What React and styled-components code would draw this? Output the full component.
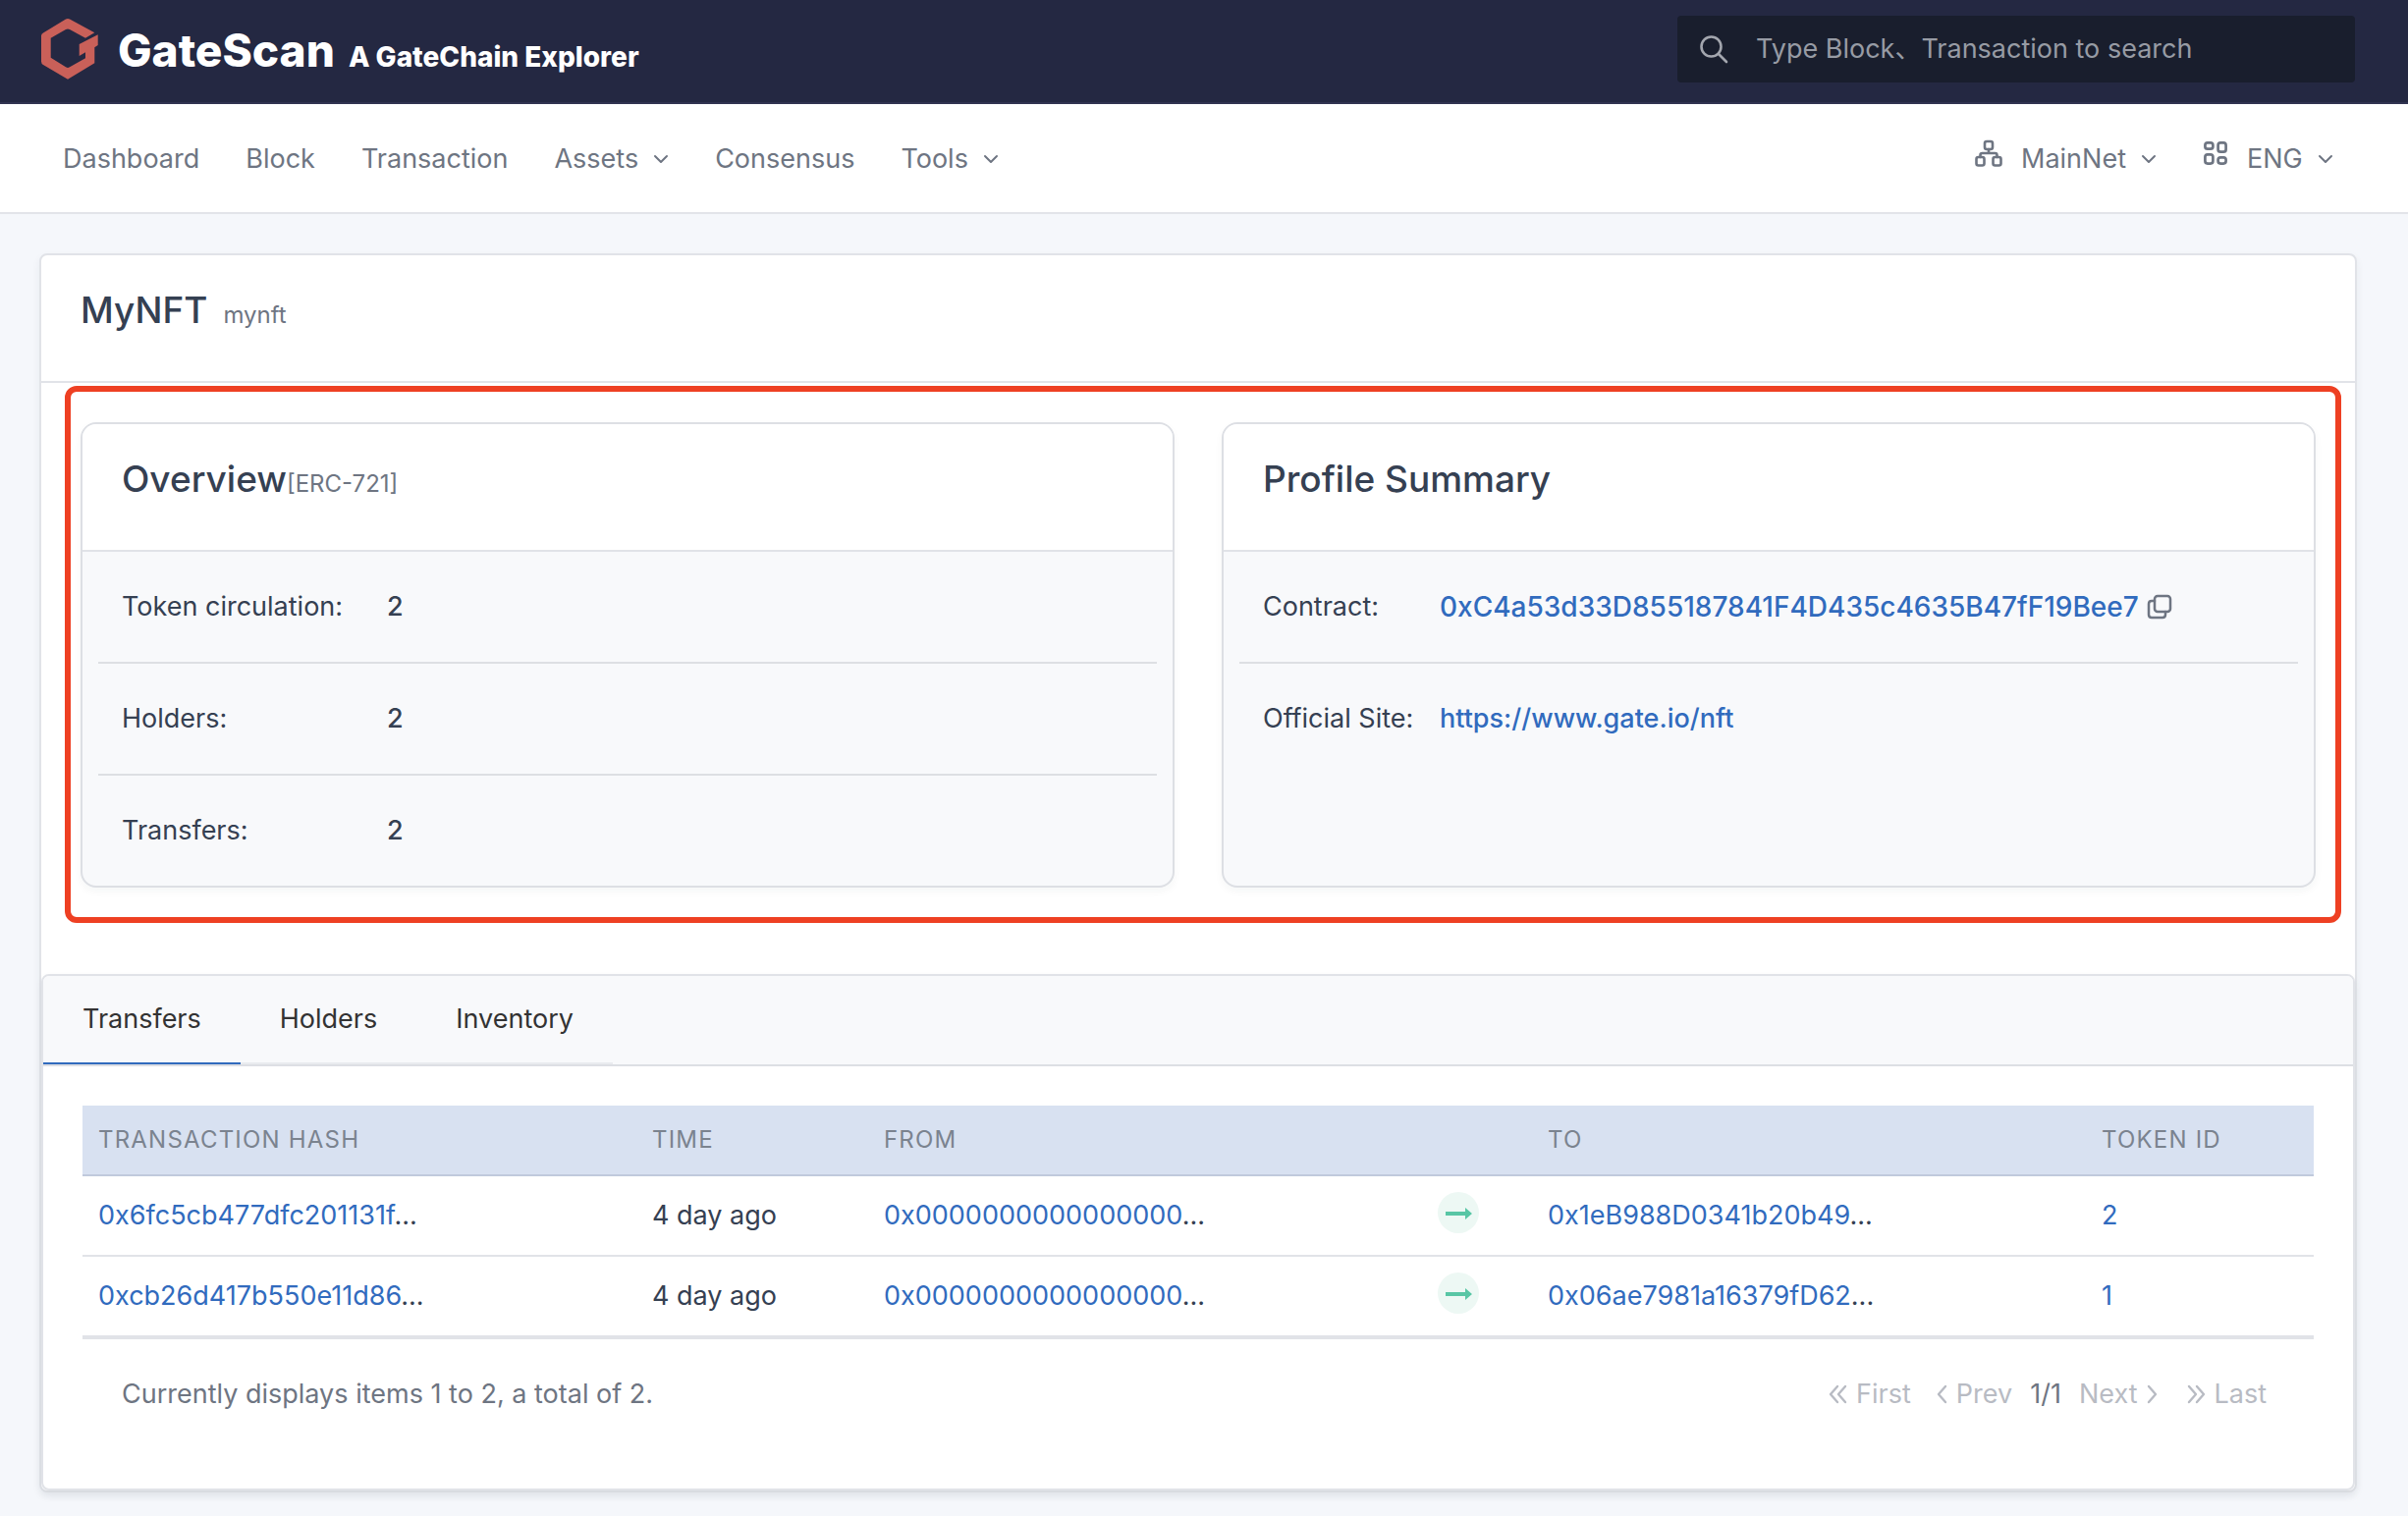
import React from "react";
import styled, { createGlobalStyle } from "styled-components";

const GlobalStyle = createGlobalStyle`
  *, *::before, *::after { box-sizing: border-box; }
  body {
    margin: 0;
    background: #f5f7fb;
    color: #354052;
    font-family: Inter, "Noto Sans CJK SC", "Liberation Sans", sans-serif;
    font-size: 27px;
    line-height: 40px;
  }
  button, input, select { font: inherit; color: inherit; }
`;

const TopBar = styled.header`
  display: flex;
  align-items: center;
  justify-content: space-between;
  height: 106px;
  padding: 0 54px 4px 40px;
  background: #242842;
  border-bottom: 2px solid #303350;
`;

const Brand = styled.a`
  display: flex;
  align-items: center;
  gap: 20px;
  color: #fff;
  text-decoration: none;
`;

const BrandText = styled.span`
  display: flex;
  align-items: baseline;
  gap: 14px;
  padding-top: 2px;
  font-weight: 800;
`;

const BrandName = styled.span`
  font-size: 46px;
  line-height: 56px;
`;

const Tagline = styled.span`
  font-size: 28px;
`;

const SearchBox = styled.label`
  display: flex;
  align-items: center;
  gap: 28px;
  width: 690px;
  height: 68px;
  padding: 0 22px;
  border-radius: 4px;
  background: #191e2d;
  color: #a3a6ae;
`;

const SearchInput = styled.input`
  flex: 1;
  min-width: 0;
  padding: 0;
  border: 0;
  outline: 0;
  background: transparent;
  &::placeholder { color: #979ba4; opacity: 1; }
`;

const NavBar = styled.nav`
  display: flex;
  align-items: center;
  justify-content: space-between;
  height: 112px;
  padding: 2px 76px 0 64px;
  background: #fff;
  border-bottom: 2px solid #e2e4e9;
  color: #6e7582;
`;

const NavGroup = styled.div`
  display: flex;
  align-items: center;
  gap: 47px;
`;

const NavLink = styled.a`
  color: inherit;
  text-decoration: none;
`;

const MenuButton = styled.button`
  display: flex;
  align-items: center;
  gap: 15px;
  padding: 0;
  border: 0;
  background: none;
`;

const Picker = styled.label`
  display: flex;
  align-items: center;
  gap: 15px;
`;

const PickerIcon = styled.span`
  display: flex;
  padding: 0 4px 12px 0;
`;

const PickerSelect = styled.select`
  appearance: none;
  padding: 0;
  border: 0;
  background: none;
`;

const Page = styled.main`
  padding: 40px 52px 24px 40px;
`;

const Panel = styled.section`
  background: #fff;
  border: 2px solid #e1e3e8;
  border-radius: 8px;
  box-shadow: 0 4px 8px rgba(35, 46, 60, 0.06);
`;

const PanelHeader = styled.div`
  display: flex;
  align-items: baseline;
  gap: ${(p) => p.$gap || 0}px;
  height: 130px;
  padding: 36px 40px;
  border-bottom: 2px solid #e1e3e8;
`;

const Title = styled.h2`
  margin: 0;
  font-size: 37px;
  line-height: 40px;
  font-weight: 500;
`;

const Subtitle = styled.span`
  font-size: 24px;
  color: #6e7582;
`;

const Summary = styled.div`
  position: relative;
  display: grid;
  grid-template-columns: 1fr 1fr;
  gap: 48px;
  padding: 40px;
  margin-bottom: 48px;
`;

const Highlight = styled.div`
  position: absolute;
  inset: 3px 14px 4px 24px;
  border: 6px solid #ee4023;
  border-radius: 12px;
  pointer-events: none;
`;

const InfoCard = styled.section`
  overflow: hidden;
  background: #f8f9fb;
  border: 2px solid #dddfe4;
  border-radius: 16px;
  box-shadow: 0 4px 8px rgba(35, 46, 60, 0.04);
  ${PanelHeader} { background: #fff; }
`;

const InfoList = styled.dl`
  margin: 0;
  padding: 0 16px;
`;

const InfoRow = styled.div`
  display: grid;
  grid-template-columns: ${(p) => p.$label}px 1fr;
  align-items: center;
  padding: 36px 24px;
  & + & { border-top: 2px solid #dddfe3; }
`;

const InfoValue = styled.dd`
  display: flex;
  align-items: center;
  gap: 8px;
  margin: 0;
  font-weight: 500;
`;

const TextLink = styled.a`
  color: #316bbe;
  text-decoration: none;
`;

const AddressLink = styled(TextLink)`
  font-size: 28px;
`;

const IconButton = styled.button`
  display: flex;
  padding: 0;
  border: 0;
  background: none;
  color: #6e7582;
`;

const TabCard = styled(Panel)`
  overflow: hidden;
`;

const TabList = styled.div`
  display: flex;
  background: #f8f9fb;
  border-bottom: 2px solid #dddfe4;
`;

const Tab = styled.button`
  padding: 24px 40px;
  border: 0;
  border-bottom: 2px solid ${(p) => (p.$active ? "#316bbe" : "#e9ebef")};
  background: none;
  color: #333;
`;

const TabBody = styled.div`
  padding: 40px;
`;

const Table = styled.table`
  width: 100%;
  table-layout: fixed;
  border-collapse: separate;
  border-spacing: 0;
  border-bottom: 2px solid #e1e3e8;
`;

const Col = styled.col`
  width: ${(p) => (p.$w ? p.$w + "px" : "auto")};
`;

const HeadCell = styled.th`
  padding: 15px 16px;
  text-align: left;
  font-size: 24px;
  font-weight: 400;
  letter-spacing: 0.05em;
  text-transform: uppercase;
  color: #7b838f;
  background: #d8e1f1;
  border-bottom: 2px solid #c0cadc;
`;

const Cell = styled.td`
  height: 82px;
  padding: 0 16px;
  border-bottom: 2px solid #e1e3e8;
`;

const Direction = styled.span`
  display: flex;
  padding-bottom: 6px;
`;

const TableFooter = styled.div`
  display: flex;
  align-items: center;
  justify-content: space-between;
  padding: 36px 48px 36px 40px;
  color: #6e7582;
`;

const Pager = styled.div`
  display: flex;
  align-items: center;
  gap: 18px;
`;

const PageButton = styled.button`
  display: flex;
  align-items: center;
  gap: 8px;
  padding: 0;
  border: 0;
  background: none;
  &:disabled { color: #b8bbc3; }
`;

const PagerPair = styled.div`
  display: flex;
  gap: ${(p) => p.$gap}px;
`;

const Stroke = ({ w, h, sw = 2, children }) => (
  <svg width={w} height={h} viewBox={`0 0 ${w} ${h}`} fill="none" stroke="currentColor" strokeWidth={sw} strokeLinecap="round" strokeLinejoin="round" aria-hidden="true">
    {children}
  </svg>
);

const Logo = () => (
  <svg width="60" height="64" viewBox="0 0 60 64" fill="#c96059" aria-hidden="true">
    <path d="M27 1.500q2-1.200 4 0L56.300 15.300 47 20.700 31 12q-2-1.200-4 0L11.700 20.700V40.700L27 50.300q2 1.200 4 0L47 41.300V35.300L40.700 39V27L59.700 17.300V28L56.300 30.300V46.300L29 62.700 4 48q-2-1.200-2-3.500V18.500q0-1.800 2-3Z" />
  </svg>
);

const Chevron = () => (
  <Stroke w={16} h={16}><path d="M2 5l6 6 6-6" /></Stroke>
);

const NetworkIcon = () => (
  <Stroke w={28} h={28} sw={2.6}>
    <rect x="10" y="2" width="8" height="8" rx="2" />
    <rect x="1.500" y="18" width="8" height="8.500" rx="2" />
    <rect x="18.500" y="18" width="8" height="8.500" rx="2" />
    <path d="M14 10v4M5.500 18v-2q0-2 2-2h13q2 0 2 2v2" />
  </Stroke>
);

const GridIcon = () => (
  <Stroke w={26} h={26} sw={2.7}>
    <rect x="2.400" y="2.400" width="8" height="6.300" rx="2.500" />
    <rect x="15.600" y="2.400" width="8" height="9.300" rx="2.500" />
    <rect x="2.400" y="14.300" width="8" height="9.300" rx="2.500" />
    <rect x="15.600" y="17.300" width="8" height="6.300" rx="2.500" />
  </Stroke>
);

const SearchIcon = () => (
  <Stroke w={30} h={30} sw={2.6}><circle cx="12.500" cy="12.500" r="10" /><path d="M20 20l8 8" /></Stroke>
);

const CopyIcon = () => (
  <Stroke w={26} h={26} sw={2.5}>
    <rect x="8" y="2" width="16" height="16" rx="3" />
    <path d="M8 7H5q-3 0-3 3v11q0 3 3 3h11q3 0 3-3v-3" />
  </Stroke>
);

const ArrowBadge = () => (
  <svg width="42" height="42" viewBox="0 0 42 42" aria-hidden="true">
    <circle cx="21" cy="21" r="21" fill="#edf8f4" />
    <path d="M8 20H28V16L35 22 28 28V24H8Z" fill="#58c6a5" />
  </svg>
);

const AngleLeft = () => <Stroke w={14} h={20} sw={2.4}><path d="M11 2L4 10l7 8" /></Stroke>;
const AngleRight = () => <Stroke w={14} h={20} sw={2.4}><path d="M4 2l7 8-7 8" /></Stroke>;
const DoubleLeft = () => <Stroke w={20} h={20} sw={2.4}><path d="M9 2l-7 8 7 8M17 2l-7 8 7 8" /></Stroke>;
const DoubleRight = () => <Stroke w={20} h={20} sw={2.4}><path d="M3 2l7 8-7 8M11 2l7 8-7 8" /></Stroke>;

const transfers = [
  { hash: "0x6fc5cb477dfc201131f", time: "4 day ago", from: "0x0000000000000000", to: "0x1eB988D0341b20b49", id: "2" },
  { hash: "0xcb26d417b550e11d86", time: "4 day ago", from: "0x0000000000000000", to: "0x06ae7981a16379fD62", id: "1" },
];

const overview = [
  ["Token circulation:", "2"],
  ["Holders:", "2"],
  ["Transfers:", "2"],
];

export default function App() {
  const [tab, setTab] = React.useState("Transfers");
  return (
    <>
      <GlobalStyle />
      <TopBar>
        <Brand href="#">
          <Logo />
          <BrandText>
            <BrandName>GateScan</BrandName>
            <Tagline>A GateChain Explorer</Tagline>
          </BrandText>
        </Brand>
        <SearchBox>
          <SearchIcon />
          <SearchInput type="text" placeholder="Type Block、Transaction to search" />
        </SearchBox>
      </TopBar>
      <NavBar>
        <NavGroup>
          <NavLink href="#">Dashboard</NavLink>
          <NavLink href="#">Block</NavLink>
          <NavLink href="#">Transaction</NavLink>
          <MenuButton aria-haspopup="menu">Assets <Chevron /></MenuButton>
          <NavLink href="#">Consensus</NavLink>
          <MenuButton aria-haspopup="menu">Tools <Chevron /></MenuButton>
        </NavGroup>
        <NavGroup>
          <Picker>
            <PickerIcon><NetworkIcon /></PickerIcon>
            <PickerSelect><option>MainNet</option></PickerSelect>
            <Chevron />
          </Picker>
          <Picker>
            <PickerIcon><GridIcon /></PickerIcon>
            <PickerSelect><option>ENG</option></PickerSelect>
            <Chevron />
          </Picker>
        </NavGroup>
      </NavBar>
      <Page>
        <Panel>
          <PanelHeader $gap={16}>
            <Title>MyNFT</Title>
            <Subtitle>mynft</Subtitle>
          </PanelHeader>
          <Summary>
            <InfoCard>
              <PanelHeader>
                <Title>Overview</Title>
                <Subtitle>[ERC-721]</Subtitle>
              </PanelHeader>
              <InfoList>
                {overview.map(([label, value]) => (
                  <InfoRow key={label} $label={270}>
                    <dt>{label}</dt>
                    <InfoValue>{value}</InfoValue>
                  </InfoRow>
                ))}
              </InfoList>
            </InfoCard>
            <InfoCard>
              <PanelHeader>
                <Title>Profile Summary</Title>
              </PanelHeader>
              <InfoList>
                <InfoRow $label={180}>
                  <dt>Contract:</dt>
                  <InfoValue>
                    <AddressLink href="#">0xC4a53d33D855187841F4D435c4635B47fF19Bee7</AddressLink>
                    <IconButton aria-label="Copy"><CopyIcon /></IconButton>
                  </InfoValue>
                </InfoRow>
                <InfoRow $label={180}>
                  <dt>Official Site:</dt>
                  <InfoValue>
                    <TextLink href="#">https://www.gate.io/nft</TextLink>
                  </InfoValue>
                </InfoRow>
              </InfoList>
            </InfoCard>
            <Highlight />
          </Summary>
          <TabCard>
            <TabList role="tablist">
              {["Transfers", "Holders", "Inventory"].map((name) => (
                <Tab key={name} role="tab" aria-selected={tab === name} $active={tab === name} onClick={() => setTab(name)}>
                  {name}
                </Tab>
              ))}
            </TabList>
            <TabBody>
              <Table>
                <colgroup>
                  <Col /><Col $w={236} /><Col /><Col $w={112} /><Col /><Col $w={232} />
                </colgroup>
                <thead>
                  <tr>
                    <HeadCell>Transaction Hash</HeadCell>
                    <HeadCell>Time</HeadCell>
                    <HeadCell>From</HeadCell>
                    <HeadCell />
                    <HeadCell>To</HeadCell>
                    <HeadCell>Token ID</HeadCell>
                  </tr>
                </thead>
                <tbody>
                  {transfers.map((t) => (
                    <tr key={t.hash}>
                      <Cell><TextLink href="#">{t.hash}</TextLink>...</Cell>
                      <Cell>{t.time}</Cell>
                      <Cell><TextLink href="#">{t.from}</TextLink>...</Cell>
                      <Cell><Direction><ArrowBadge /></Direction></Cell>
                      <Cell><TextLink href="#">{t.to}</TextLink>...</Cell>
                      <Cell><TextLink href="#">{t.id}</TextLink></Cell>
                    </tr>
                  ))}
                </tbody>
              </Table>
              <TableFooter>
                <span>Currently displays items 1 to 2, a total of 2.</span>
                <Pager>
                  <PagerPair $gap={24}>
                    <PageButton disabled><DoubleLeft />First</PageButton>
                    <PageButton disabled><AngleLeft />Prev</PageButton>
                  </PagerPair>
                  <span>1/1</span>
                  <PagerPair $gap={28}>
                    <PageButton disabled>Next<AngleRight /></PageButton>
                    <PageButton disabled><DoubleRight />Last</PageButton>
                  </PagerPair>
                </Pager>
              </TableFooter>
            </TabBody>
          </TabCard>
        </Panel>
      </Page>
    </>
  );
}
